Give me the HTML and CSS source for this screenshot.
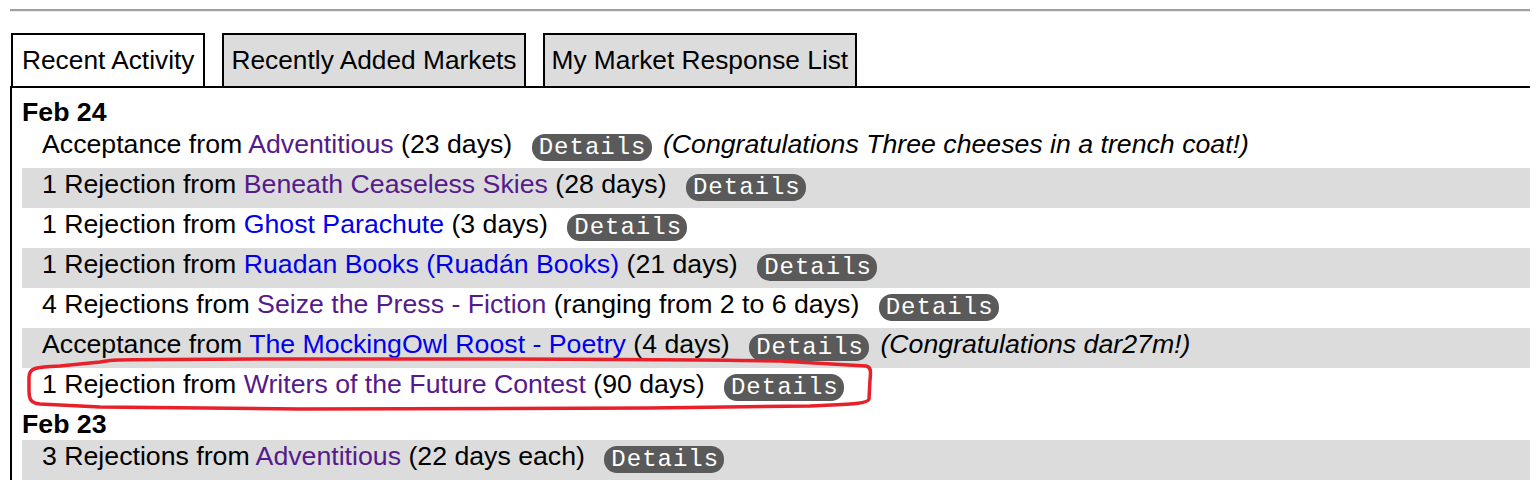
FILE: index.html
```html
<!DOCTYPE html>
<html>
<head>
<meta charset="utf-8">
<link rel="stylesheet" href="styles.css">
</head>
<body>
<div class="topline"></div>
<div class="tabs">
  <div class="tab active">Recent Activity</div>
  <div class="tab">Recently Added Markets</div>
  <div class="tab">My Market Response List</div>
</div>
<div class="panel">
  <div class="day">Feb 24</div>
  <div class="row">Acceptance from <a class="v">Adventitious</a> (23 days) <span class="badge">Details</span> <i>(Congratulations Three cheeses in a trench coat!)</i></div>
  <div class="row alt">1 Rejection from <a class="v">Beneath Ceaseless Skies</a> (28 days) <span class="badge">Details</span></div>
  <div class="row">1 Rejection from <a class="n">Ghost Parachute</a> (3 days) <span class="badge">Details</span></div>
  <div class="row alt">1 Rejection from <a class="n">Ruadan Books (Ruadán Books)</a> (21 days) <span class="badge">Details</span></div>
  <div class="row">4 Rejections from <a class="v">Seize the Press - Fiction</a> (ranging from 2 to 6 days) <span class="badge">Details</span></div>
  <div class="row alt">Acceptance from <a class="n">The MockingOwl Roost - Poetry</a> (4 days) <span class="badge">Details</span> <i>(Congratulations dar27m!)</i></div>
  <div class="row">1 Rejection from <a class="v">Writers of the Future Contest</a> (90 days) <span class="badge">Details</span></div>
  <div class="day">Feb 23</div>
  <div class="row alt">3 Rejections from <a class="v">Adventitious</a> (22 days each) <span class="badge">Details</span></div>
</div>
<svg class="mark" width="1538" height="480" viewBox="0 0 1538 480">
  <path d="M 118 360 C 300 358, 650 359, 780 361 L 866 366 C 871 367, 871 371, 870 380 L 869 399 C 868 404, 850 404, 810 406 L 650 408 L 300 409 L 100 407 L 40 404 C 31 403, 29 400, 29 390 L 29 377 C 29 368, 35 367, 60 366 L 100 362 C 108 361, 112 360, 118 360 Z" fill="none" stroke="#e8202a" stroke-width="3.5" stroke-linejoin="round"/>
</svg>
</body>
</html>
```

FILE: styles.css
```css
html {
  overflow: hidden;
}
body {
  margin: 8px;
  font-family: "Liberation Sans", Arial, sans-serif;
  font-size: 26.7px;
  color: #000;
  background: #fff;
}
.topline {
  margin: 1px -8px 0 2px;
  height: 2px;
  background: #a0a0a0;
  border-bottom: 1px solid #ececec;
}
.tabs {
  display: flex;
  align-items: flex-end;
  gap: 17px;
  margin: 21px 0 0 3px;
  font-size: 26.3px;
}
.tab {
  border: 2px solid #000;
  border-bottom: none;
  background: #dcdcdc;
  line-height: 30px;
  height: 30px;
  padding: 10px 7px 11px;
  white-space: nowrap;
}
.tab.active {
  background: #fff;
  padding: 10px 9px 11px;
}
.panel {
  margin: 0 -30px 0 2px;
  border-top: 2px solid #000;
  border-left: 2px solid #000;
  padding: 8px 0 0 10px;
}
.day {
  font-weight: bold;
  line-height: 32px;
  height: 32px;
}
.row {
  line-height: 30px;
  height: 30px;
  padding: 1px 0 9px 20px;
  white-space: nowrap;
}
.row.alt {
  background: #dcdcdc;
}
a {
  text-decoration: none;
}
a.v {
  color: #551a8b;
}
a.n {
  color: #0000ee;
}
.badge {
  display: inline-block;
  font-family: "Liberation Mono", "Courier New", monospace;
  font-weight: normal;
  font-size: 24px;
  letter-spacing: 1px;
  line-height: 23px;
  padding: 2px 5px 2px 7px;
  margin: 0 4px 0 12px;
  background: #5a5a5a;
  color: #fff;
  border-radius: 13px;
  vertical-align: -1px;
}
.mark {
  position: absolute;
  left: 0;
  top: 0;
  pointer-events: none;
}
```
